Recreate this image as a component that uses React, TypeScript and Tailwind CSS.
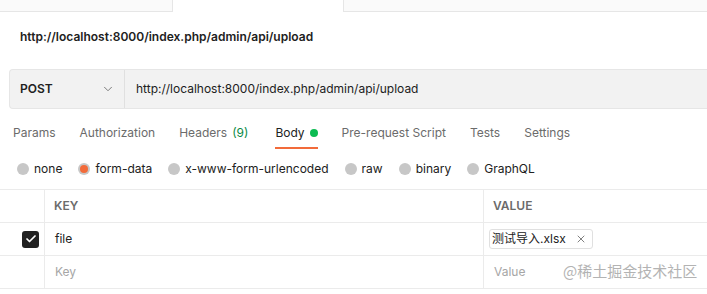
import { ChevronDown, X, Check } from 'lucide-react';

const tabs = [
  { label: 'Params' },
  { label: 'Authorization' },
  { label: 'Headers', count: '(9)' },
  { label: 'Body', active: true },
  { label: 'Pre-request Script' },
  { label: 'Tests' },
  { label: 'Settings' },
];

const bodyTypes = ['none', 'form-data', 'x-www-form-urlencoded', 'raw', 'binary', 'GraphQL'];

function Radio({ label, checked }: { label: string; checked?: boolean }) {
  return (
    <div className="flex items-center gap-[5px]">
      <span className="w-[12px] h-[12px] rounded-full bg-[#c7c7c7] flex items-center justify-center">
        {checked && <span className="w-[8px] h-[8px] rounded-full bg-[#f26b3a]" />}
      </span>
      <span className="text-[#212121]">{label}</span>
    </div>
  );
}

export default function App() {
  const url = 'http://localhost:8000/index.php/admin/api/upload';
  return (
    <div className="w-[707px] h-[294px] bg-white overflow-hidden relative text-[12px] text-[#212121]" style={{ fontFamily: 'Inter, "Noto Sans CJK SC", sans-serif' }}>
      {/* tab strip */}
      <div className="flex h-[12px]">
        <div className="w-[172px] bg-[#fafafa] border-b border-[#e6e6e6]" />
        <div className="w-[172px] bg-white border-x border-[#e6e6e6]" />
        <div className="flex-1 bg-[#fafafa] border-b border-[#e6e6e6]" />
      </div>

      <div className="h-[48px] flex items-center pl-[20px] pt-[1px] font-semibold">{url}</div>

      {/* request bar */}
      <div className="ml-[9px] mt-[9px] h-[40px] flex bg-[#f2f2f2] border border-[#e6e6e6] rounded-l-[4px] border-r-0">
        <div className="w-[115px] flex items-center justify-between pl-[10px] pr-[9px] border-r border-[#e0e0e0]">
          <span className="font-semibold">POST</span>
          <ChevronDown size={14} strokeWidth={1.5} className="text-[#6b6b6b]" />
        </div>
        <div className="flex items-center pl-[11px]">{url}</div>
      </div>

      {/* tabs */}
      <div className="flex pl-[13px] h-[48px] gap-[24px] text-[#6b6b6b]">
        {tabs.map((t) => (
          <div key={t.label} className={`relative flex items-center gap-[5px] ${t.active ? 'text-[#212121]' : ''}`}>
            <span>{t.label}</span>
            {t.count && <span className="text-[#0a8a45] pr-[3px]">{t.count}</span>}
            {t.active && <span className="w-[8px] h-[8px] rounded-full bg-[#0cbb52]" />}
            {t.active && <span className="absolute left-0 right-0 bottom-[8px] h-[2px] bg-[#f26b3a]" />}
          </div>
        ))}
      </div>

      {/* body types */}
      <div className="flex pl-[17px] h-[24px] items-center gap-[16px]">
        {bodyTypes.map((b) => (
          <Radio key={b} label={b} checked={b === 'form-data'} />
        ))}
      </div>

      {/* table */}
      <div className="mt-[8px] border-t border-[#ebebeb]">
        <div className="flex h-[33px] border-b border-[#ebebeb] text-[12px] font-semibold text-[#6b6b6b]">
          <div className="w-[45px] border-r border-[#ebebeb]" />
          <div className="w-[439px] border-r border-[#ebebeb] flex items-center pl-[9px]">KEY</div>
          <div className="flex-1 flex items-center pl-[9px]">VALUE</div>
        </div>
        <div className="flex h-[33px] border-b border-[#ebebeb]">
          <div className="w-[45px] border-r border-[#ebebeb] flex items-center justify-end pr-[5px]">
            <span className="w-[17px] h-[17px] rounded-[3px] bg-[#212121] flex items-center justify-center">
              <Check size={12} strokeWidth={3.5} className="text-white" />
            </span>
          </div>
          <div className="w-[439px] border-r border-[#ebebeb] flex items-center pl-[10px]">file</div>
          <div className="flex-1 flex items-center pl-[5px]">
            <span className="h-[20px] flex items-center gap-[9px] border border-[#e0e0e0] rounded-[3px] pl-[2px] pr-[5px]">
              <span>测试导入.xlsx</span>
              <X size={12} strokeWidth={1.5} className="text-[#555]" />
            </span>
          </div>
        </div>
        <div className="flex h-[33px] border-b border-[#ebebeb] text-[#a6a6a6]">
          <div className="w-[45px] border-r border-[#ebebeb]" />
          <div className="w-[439px] border-r border-[#ebebeb] flex items-center pl-[10px]">Key</div>
          <div className="flex-1 flex items-center pl-[10px]">Value</div>
        </div>
      </div>

      <div className="absolute left-[563px] top-[260px] text-[15px] text-[#b3b3b3]" style={{ fontFamily: '"Noto Sans CJK SC", sans-serif' }}>@稀土掘金技术社区</div>
    </div>
  );
}
